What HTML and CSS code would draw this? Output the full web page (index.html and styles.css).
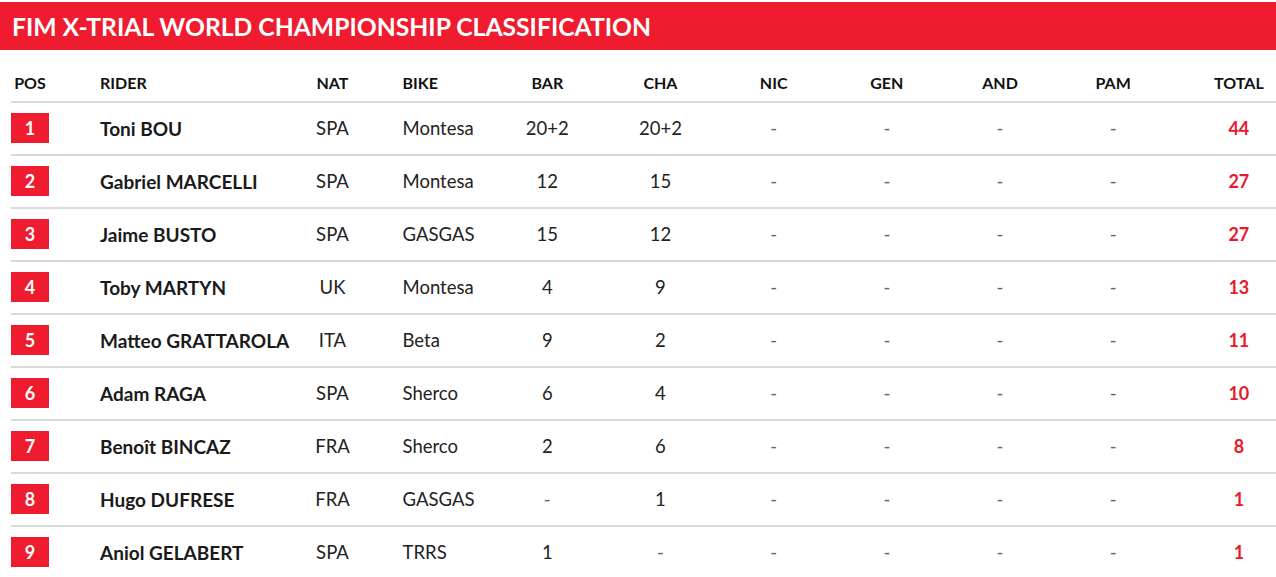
FILE: index.html
```html
<!DOCTYPE html>
<html lang="en">
<head>
<meta charset="utf-8">
<title>FIM X-Trial World Championship Classification</title>
<link rel="stylesheet" href="styles.css">
</head>
<body>
<div class="page">
  <h1 class="title-bar">FIM X-TRIAL WORLD CHAMPIONSHIP CLASSIFICATION</h1>
  <table class="standings">
    <colgroup>
      <col class="c-pos"><col class="c-rider"><col class="c-nat"><col class="c-bike">
      <col class="c-round"><col class="c-round"><col class="c-round"><col class="c-round"><col class="c-round"><col class="c-round">
      <col class="c-total">
    </colgroup>
    <thead>
      <tr>
        <th class="pos">POS</th><th class="rider">RIDER</th><th class="nat">NAT</th><th class="bike">BIKE</th>
        <th>BAR</th><th>CHA</th><th>NIC</th><th>GEN</th><th>AND</th><th>PAM</th><th class="total">TOTAL</th>
      </tr>
    </thead>
    <tbody>
      <tr><td class="pos"><span class="badge">1</span></td><td class="rider">Toni BOU</td><td class="nat">SPA</td><td class="bike">Montesa</td><td>20+2</td><td>20+2</td><td class="dash">-</td><td class="dash">-</td><td class="dash">-</td><td class="dash">-</td><td class="total">44</td></tr>
      <tr><td class="pos"><span class="badge">2</span></td><td class="rider">Gabriel MARCELLI</td><td class="nat">SPA</td><td class="bike">Montesa</td><td>12</td><td>15</td><td class="dash">-</td><td class="dash">-</td><td class="dash">-</td><td class="dash">-</td><td class="total">27</td></tr>
      <tr><td class="pos"><span class="badge">3</span></td><td class="rider">Jaime BUSTO</td><td class="nat">SPA</td><td class="bike">GASGAS</td><td>15</td><td>12</td><td class="dash">-</td><td class="dash">-</td><td class="dash">-</td><td class="dash">-</td><td class="total">27</td></tr>
      <tr><td class="pos"><span class="badge">4</span></td><td class="rider">Toby MARTYN</td><td class="nat">UK</td><td class="bike">Montesa</td><td>4</td><td>9</td><td class="dash">-</td><td class="dash">-</td><td class="dash">-</td><td class="dash">-</td><td class="total">13</td></tr>
      <tr><td class="pos"><span class="badge">5</span></td><td class="rider">Matteo GRATTAROLA</td><td class="nat">ITA</td><td class="bike">Beta</td><td>9</td><td>2</td><td class="dash">-</td><td class="dash">-</td><td class="dash">-</td><td class="dash">-</td><td class="total">11</td></tr>
      <tr><td class="pos"><span class="badge">6</span></td><td class="rider">Adam RAGA</td><td class="nat">SPA</td><td class="bike">Sherco</td><td>6</td><td>4</td><td class="dash">-</td><td class="dash">-</td><td class="dash">-</td><td class="dash">-</td><td class="total">10</td></tr>
      <tr><td class="pos"><span class="badge">7</span></td><td class="rider">Benoît BINCAZ</td><td class="nat">FRA</td><td class="bike">Sherco</td><td>2</td><td>6</td><td class="dash">-</td><td class="dash">-</td><td class="dash">-</td><td class="dash">-</td><td class="total">8</td></tr>
      <tr><td class="pos"><span class="badge">8</span></td><td class="rider">Hugo DUFRESE</td><td class="nat">FRA</td><td class="bike">GASGAS</td><td class="dash">-</td><td>1</td><td class="dash">-</td><td class="dash">-</td><td class="dash">-</td><td class="dash">-</td><td class="total">1</td></tr>
      <tr><td class="pos"><span class="badge">9</span></td><td class="rider">Aniol GELABERT</td><td class="nat">SPA</td><td class="bike">TRRS</td><td>1</td><td class="dash">-</td><td class="dash">-</td><td class="dash">-</td><td class="dash">-</td><td class="dash">-</td><td class="total">1</td></tr>
    </tbody>
  </table>
</div>
</body>
</html>
```

FILE: styles.css
```css
html, body {
  margin: 0;
  padding: 0;
  background: #ffffff;
}

body {
  font-family: Lato, "Liberation Sans", sans-serif;
  color: #222222;
  overflow: hidden;
}

.page {
  padding-top: 2px;
}

.title-bar {
  margin: 0;
  height: 48px;
  line-height: 49px;
  padding-left: 12px;
  background: #ef1b2f;
  color: #ffffff;
  font-size: 24.7px;
  font-weight: 700;
  letter-spacing: 0;
}

.standings {
  margin-left: 11px;
  width: 1265px;
  table-layout: fixed;
  border-collapse: collapse;
  border-spacing: 0;
}

.c-pos { width: 38px; }
.c-rider { width: 243px; }
.c-nat { width: 80px; }
.c-bike { width: 118px; }
.c-round { width: 113px; }
.c-total { width: 106px; }

.standings th {
  height: 36px;
  padding: 14px 0 1px 0;
  font-size: 16px;
  font-weight: 700;
  color: #111111;
  text-align: center;
  vertical-align: middle;
  border-bottom: 2px solid #dadada;
}

.standings td {
  height: 50px;
  padding: 0 0 1px 0;
  font-size: 18.5px;
  color: #222222;
  text-align: center;
  vertical-align: middle;
  border-bottom: 2px solid #dadada;
}

.standings tbody tr:last-child td {
  border-bottom: none;
}

.standings .rider {
  text-align: left;
  padding-left: 51px;
}

.standings td.rider {
  font-weight: 700;
  font-size: 19px;
  color: #1a1a1a;
}

.standings .bike {
  text-align: left;
  padding-left: 30px;
}

.standings .total {
  padding-left: 32px;
}

.standings td.total {
  color: #e8192c;
  font-weight: 700;
  font-size: 18px;
}

.standings td.dash {
  color: #666666;
}

.badge {
  display: flex;
  align-items: center;
  justify-content: center;
  width: 38px;
  height: 30px;
  background: #ef1b2f;
  color: #ffffff;
  font-weight: 700;
  font-size: 18px;
}
```
